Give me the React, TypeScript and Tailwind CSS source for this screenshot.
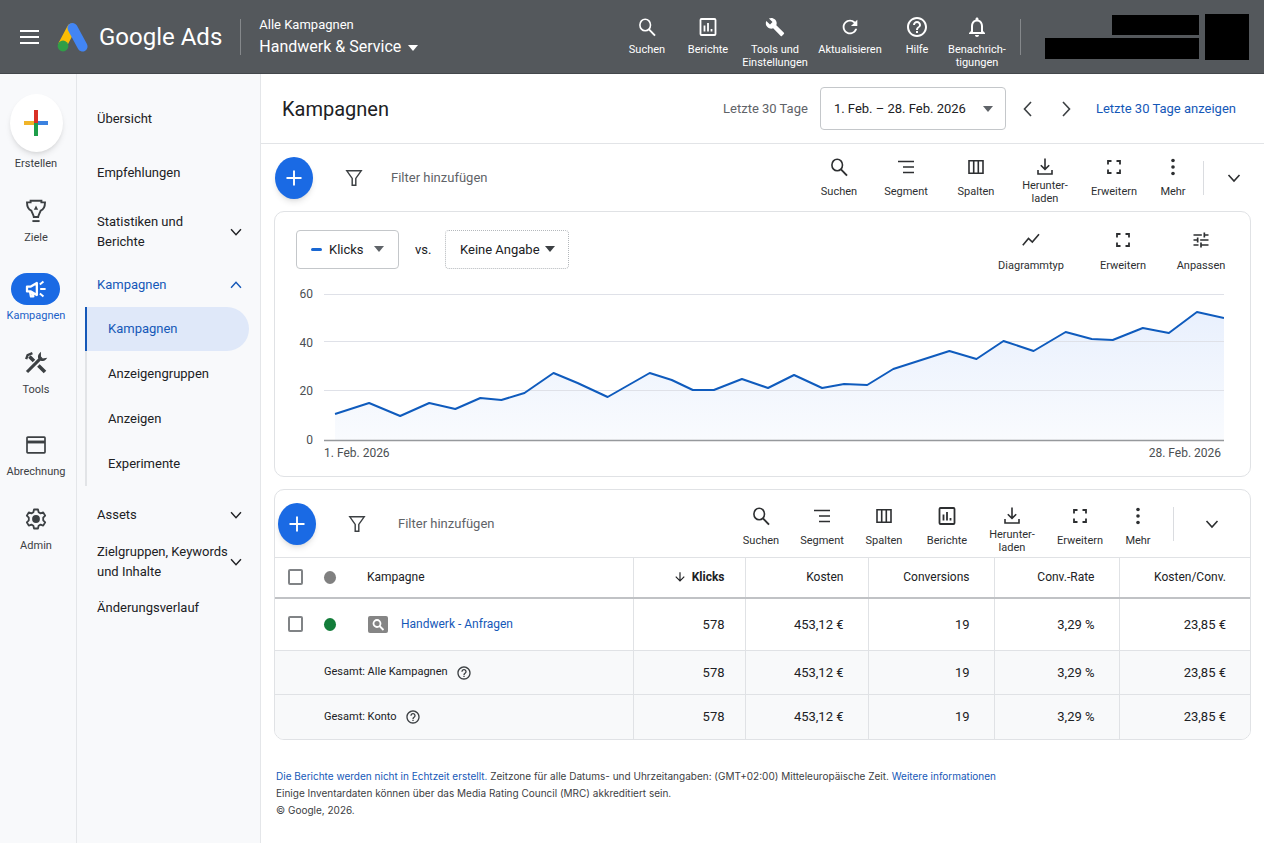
import type { ReactNode } from 'react';
import { MdArrowDownward, MdBuild, MdHelpOutline, MdOutlineNotifications, MdRefresh, MdTune } from 'react-icons/md';

interface ToolItem {
  label: ReactNode;
  icon: ReactNode;
  width: string;
}

interface RailItem {
  label: string;
  icon: ReactNode;
  spacing: string;
  active?: boolean;
}

const clicks: [number, number][] = [
  [11, 120], [45, 109], [76, 122], [105, 109], [131, 115], [156, 104], [177, 106], [200, 99],
  [229, 79], [253, 89], [283, 103], [325, 79], [347, 86], [368, 96], [389, 96], [417, 85],
  [443, 94], [469, 81], [497, 94], [519, 90], [542, 91], [568, 75], [624, 57], [651, 65],
  [678, 47], [708, 57], [740, 38], [766, 45], [787, 46], [817, 34], [843, 39], [871, 18], [898, 24],
];

const columns = [
  { label: 'Klicks', value: '578', pad: 'pr-5' },
  { label: 'Kosten', value: '453,12 €', pad: 'pr-6' },
  { label: 'Conversions', value: '19', pad: 'pr-6' },
  { label: 'Conv.-Rate', value: '3,29 %', pad: 'pr-6' },
  { label: 'Kosten/Conv.', value: '23,85 €', pad: 'pr-6' },
];

function Icon({ children, className = 'w-5 h-5' }: { children: ReactNode; className?: string }) {
  return (
    <svg viewBox="0 0 20 20" fill="none" stroke="currentColor" strokeWidth="1.6" className={className} aria-hidden="true">
      {children}
    </svg>
  );
}

const searchIcon = (
  <Icon>
    <ellipse cx="8.2" cy="8" rx="5.3" ry="5.8" />
    <path d="M12 12.4 18 18.6" strokeWidth="1.9" />
  </Icon>
);
const segmentIcon = (
  <Icon>
    <path d="M2 4.5h16M7 10h11M7 15.5h11" />
  </Icon>
);
const columnsIcon = (
  <Icon>
    <path d="M3 3.8h14v12.4H3zM7.7 4v12M12.3 4v12" />
  </Icon>
);
const reportIcon = (
  <Icon>
    <rect x="2.5" y="2" width="15" height="16" rx="1" strokeWidth="1.8" />
    <path d="M6.5 8.5v6M10 6v8.5M13.5 12v2.5" strokeWidth="1.8" />
  </Icon>
);
const downloadIcon = (
  <Icon>
    <path d="M10 1.5V12M5.8 8.2 10 12.4l4.2-4.2M3 13v4h14v-4" />
  </Icon>
);
const expandIcon = (
  <Icon>
    <path d="M4 7.5V4h3.5M12.5 4H16v3.5M16 12.5V16h-3.5M7.5 16H4v-3.5" strokeWidth="1.8" />
  </Icon>
);
const moreIcon = (
  <Icon>
    <g fill="currentColor" stroke="none">
      <circle cx="10" cy="3.5" r="1.8" />
      <circle cx="10" cy="10" r="1.8" />
      <circle cx="10" cy="16.5" r="1.8" />
    </g>
  </Icon>
);
const trendIcon = (
  <Icon>
    <path d="M1.8 15.2 7.5 8.5l3.8 3.5L18 4.2" />
  </Icon>
);

function Chevron({ dir, className = 'w-5 h-5' }: { dir: 'up' | 'down' | 'left' | 'right'; className?: string }) {
  const paths = {
    up: 'M4.5 13 10 7l5.5 6',
    down: 'M4.5 7 10 13l5.5-6',
    left: 'M13 3 6.5 10l6.5 7',
    right: 'M7 3l6.5 7L7 17',
  };
  return (
    <Icon className={className}>
      <path d={paths[dir]} />
    </Icon>
  );
}

function Caret({ className }: { className: string }) {
  return (
    <svg viewBox="0 0 10 6" className={`pointer-events-none absolute h-[6px] w-[10px] ${className}`} aria-hidden="true">
      <path d="M0 0h10L5 6z" fill="currentColor" />
    </svg>
  );
}

function FunnelIcon() {
  return (
    <Icon className="h-5 w-[18px] text-[#3c4043]">
      <path d="M2 2h16l-6 8.5V18H8v-7.5z" />
    </Icon>
  );
}

const downloadLabel = (
  <>
    Herunter-
    <br />
    laden
  </>
);

function ToolButton({ item }: { item: ToolItem }) {
  return (
    <button type="button" className={`flex flex-col items-center pt-3 text-[#2d2f31] ${item.width}`}>
      {item.icon}
      <span className="mt-0.5 flex h-[26px] items-center text-center text-[11px] leading-[13px] whitespace-nowrap">{item.label}</span>
    </button>
  );
}

function AddButton() {
  return (
    <button type="button" aria-label="Neue Kampagne" className="flex h-[42px] w-[38px] items-center justify-center rounded-[50%] bg-[#1a6ae4] text-white shadow-md">
      <Icon>
        <path d="M10 2.5v15M2.5 10h15" strokeWidth="1.9" />
      </Icon>
    </button>
  );
}

const pageTools: ToolItem[] = [
  { label: 'Suchen', icon: searchIcon, width: 'w-[66px]' },
  { label: 'Segment', icon: segmentIcon, width: 'w-[68px]' },
  { label: 'Spalten', icon: columnsIcon, width: 'w-[72px]' },
  { label: downloadLabel, icon: downloadIcon, width: 'w-[66px]' },
  { label: 'Erweitern', icon: expandIcon, width: 'w-[72px]' },
  { label: 'Mehr', icon: moreIcon, width: 'w-[46px]' },
];

const tableTools: ToolItem[] = [
  { label: 'Suchen', icon: searchIcon, width: 'w-[60px]' },
  { label: 'Segment', icon: segmentIcon, width: 'w-[62px]' },
  { label: 'Spalten', icon: columnsIcon, width: 'w-[62px]' },
  { label: 'Berichte', icon: reportIcon, width: 'w-[64px]' },
  { label: downloadLabel, icon: downloadIcon, width: 'w-[66px]' },
  { label: 'Erweitern', icon: expandIcon, width: 'w-[70px]' },
  { label: 'Mehr', icon: moreIcon, width: 'w-[46px]' },
];

const chartTools: ToolItem[] = [
  { label: 'Diagrammtyp', icon: trendIcon, width: 'w-[106px]' },
  { label: 'Erweitern', icon: expandIcon, width: 'w-[78px]' },
  { label: 'Anpassen', icon: <MdTune className="h-5 w-5" />, width: 'w-[78px]' },
];

const headerTools: ToolItem[] = [
  { label: 'Suchen', icon: searchIcon, width: 'w-[60px]' },
  { label: 'Berichte', icon: reportIcon, width: 'w-[62px]' },
  { label: <>Tools und<br />Einstellungen</>, icon: <MdBuild className="h-5 w-5" />, width: 'w-[72px]' },
  { label: 'Aktualisieren', icon: <MdRefresh className="h-[22px] w-[22px]" />, width: 'w-[78px]' },
  { label: 'Hilfe', icon: <MdHelpOutline className="h-6 w-6" />, width: 'w-[56px]' },
  { label: <>Benachrich-<br />tigungen</>, icon: <MdOutlineNotifications className="h-6 w-6" />, width: 'w-[64px]' },
];

function Header() {
  return (
    <header className="flex h-[74px] items-center border-b border-[#43474b] bg-[#54585c] text-white">
      <button type="button" aria-label="Menü" className="ml-5 flex h-5 w-[19px] items-center">
        <svg viewBox="0 0 19 14" className="h-[14px] w-[19px]" stroke="currentColor" strokeWidth="2" aria-hidden="true">
          <path d="M0 1h19M0 7h19M0 13h19" />
        </svg>
      </button>
      <svg viewBox="0 0 31 30" className="ml-[18px] h-[30px] w-[31px]" strokeLinecap="round" aria-hidden="true">
        <path d="M14.5 6 6 22" stroke="#fbbc04" strokeWidth="9" />
        <path d="M15.500 6 25.5 24.5" stroke="#4285f4" strokeWidth="10" />
        <circle cx="6" cy="24" r="5.4" fill="#2f9e47" />
      </svg>
      <span className="ml-[11px] text-2xl whitespace-nowrap">Google Ads</span>
      <div className="ml-[18px] h-9 w-px bg-[#85888b]" />
      <div className="ml-[18px] flex flex-col">
        <label htmlFor="account" className="text-[13px] leading-5">Alle Kampagnen</label>
        <div className="relative">
          <select id="account" className="w-[162px] appearance-none bg-transparent text-base leading-6">
            <option>Handwerk &amp; Service</option>
          </select>
          <Caret className="top-[10px] right-[3px]" />
        </div>
      </div>
      <nav className="ml-auto flex h-full pt-4" aria-label="Hauptfunktionen">
        {headerTools.map((item, i) => (
          <button key={i} type="button" className={`flex flex-col items-center ${item.width}`}>
            <span className="flex h-[22px] items-center">{item.icon}</span>
            <span className="mt-[5px] text-[11px] leading-[13px] whitespace-nowrap">{item.label}</span>
          </button>
        ))}
      </nav>
      <div className="ml-[11px] h-9 w-px bg-[#85888b]" />
      <div className="ml-6 flex w-[154px] flex-col items-end gap-[3px]">
        <div className="h-5 w-[87px] bg-black" />
        <div className="h-[21px] w-full bg-black" />
      </div>
      <div className="mr-[15px] ml-1.5 h-[46px] w-11 bg-black" />
    </header>
  );
}

const railItems: RailItem[] = [
  {
    label: 'Ziele',
    spacing: 'mt-6',
    icon: (
      <Icon className="h-6 w-6">
        <path d="M5.5 1.5h9v1.300h3c0 4-1.2 6.200-3.600 6.900C13 12 12 13.500 11.800 15H8.200C8 13.500 7 12 6.100 9.700 3.700 9 2.500 6.800 2.500 2.800h3z" />
        <path d="M7 18.400h6" />
        <path d="M10 5.500 11.800 9H8.200z" fill="currentColor" stroke="none" />
      </Icon>
    ),
  },
  {
    label: 'Kampagnen',
    spacing: 'mt-7',
    active: true,
    icon: (
      <Icon className="h-6 w-6">
        <path d="M2.5 8h3.200l5-3v10l-5-3H2.500zM5 12.200l.8 4h2l-.6-3.400" strokeWidth="1.900" strokeLinejoin="round" />
        <path d="M13.500 10h4.500M13.200 6.200l3-2.400M13.200 13.800l3 2.400" strokeWidth="1.700" />
      </Icon>
    ),
  },
  {
    label: 'Tools',
    spacing: 'mt-6',
    icon: (
      <Icon className="h-6 w-6">
        <path d="M4.500 4.500 8.300 8.300M12 12l5.500 5.500" strokeWidth="3" />
        <path d="M1.800 6.800 3 3.500 7 1.800" strokeWidth="2" />
        <path d="M2.500 17.500 13 7" strokeWidth="2.600" />
        <path d="M13.600 1.800c-1.800 1.600-2 3.800-.6 5.200s3.800 1.200 5.200-.6l-2.700.4-1.900-2z" fill="currentColor" strokeWidth="1" />
      </Icon>
    ),
  },
  {
    label: 'Abrechnung',
    spacing: 'mt-8',
    icon: (
      <Icon className="h-6 w-6">
        <rect x="2.5" y="3.5" width="15" height="13" rx=".6" strokeWidth="1.4" />
        <path d="M2.5 7.5h15" strokeWidth="2.4" />
      </Icon>
    ),
  },
  {
    label: 'Admin',
    spacing: 'mt-6',
    icon: (
      <svg viewBox="0 0 24 24" className="h-6 w-6" fill="none" stroke="currentColor" strokeWidth="1.8" strokeLinejoin="round" aria-hidden="true">
        <path d="M10 2.5h4l.6 2.800 2 1.100 2.600-1 2 3.300-2 2v2.600l2 2-2 3.300-2.600-1-2 1.100-.6 2.800h-4l-.6-2.800-2-1.100-2.600 1-2-3.300 2-2v-2.600l-2-2 2-3.300 2.600 1 2-1.100z" />
        <circle cx="12" cy="12" r="3" fill="currentColor" />
      </svg>
    ),
  },
];

function Rail() {
  return (
    <nav className="flex w-[77px] flex-none flex-col items-center border-r border-[#e4e6e9] pt-5 pr-1" aria-label="Bereiche">
      <button type="button" className="flex flex-col items-center text-[11px] text-[#3c4043]">
        <span className="flex h-[58px] w-[53px] items-center justify-center rounded-[50%] bg-white shadow-md">
          <svg viewBox="0 0 24 26" className="h-[26px] w-6" strokeWidth="4" aria-hidden="true">
            <path d="M0 13h10" stroke="#f0b429" />
            <path d="M14 13h10" stroke="#3b82e0" />
            <path d="M12 0v13" stroke="#d93025" />
            <path d="M12 13v13" stroke="#1e9e4a" />
          </svg>
        </span>
        <span className="mt-[5px] leading-[14px]">Erstellen</span>
      </button>
      {railItems.map((item) => (
        <a key={item.label} href="#" className={`flex flex-col items-center text-[11px] ${item.spacing} ${item.active ? 'text-[#1a5fc8]' : 'text-[#3c4043]'}`}>
          <span className={`flex h-8 w-[49px] items-center justify-center rounded-full ${item.active ? 'bg-[#1a6ae4] text-white' : ''}`}>{item.icon}</span>
          <span className="mt-1 leading-[14px]">{item.label}</span>
        </a>
      ))}
    </nav>
  );
}

function NavLink({ children, height, chevron, active }: { children: ReactNode; height: string; chevron?: 'up' | 'down'; active?: boolean }) {
  return (
    <a href="#" className={`flex items-center justify-between pr-[15px] pl-5 leading-5 ${height} ${active ? 'text-[#1558b8]' : ''}`}>
      <span className="min-w-0 whitespace-nowrap">{children}</span>
      {chevron && <Chevron dir={chevron} className="h-[18px] w-[18px] flex-none" />}
    </a>
  );
}

function SideNav() {
  return (
    <nav className="w-[184px] flex-none border-r border-[#e4e6e9] pt-[18px] text-[13px] text-[#202124]" aria-label="Seiten">
      <NavLink height="h-[54px]">Übersicht</NavLink>
      <NavLink height="h-[54px]">Empfehlungen</NavLink>
      <NavLink height="h-[63px]" chevron="down">Statistiken und<br />Berichte</NavLink>
      <NavLink height="h-11" chevron="up" active>Kampagnen</NavLink>
      <div className="mr-[11px] ml-2">
        <a href="#" aria-current="page" className="flex h-11 items-center rounded-r-full border-l-2 border-[#1558b8] bg-[#dfe8f9] pl-[21px] text-[#1558b8]">Kampagnen</a>
        {['Anzeigengruppen', 'Anzeigen', 'Experimente'].map((name) => (
          <a key={name} href="#" className="flex h-[45px] items-center border-l-2 border-[#e2e4e7] pl-[21px]">{name}</a>
        ))}
      </div>
      <div className="pt-[7px]">
        <NavLink height="h-11" chevron="down">Assets</NavLink>
        <NavLink height="h-[50px]" chevron="down">Zielgruppen, Keywords<br />und Inhalte</NavLink>
        <NavLink height="h-[42px]">Änderungsverlauf</NavLink>
      </div>
    </nav>
  );
}

function TitleBar() {
  return (
    <div className="flex h-[70px] items-center border-b border-[#e2e4e7] pr-7 pl-[21px] text-[13px]">
      <h1 className="text-xl text-[#202124]">Kampagnen</h1>
      <label htmlFor="range" className="ml-auto text-[#5f6368]">Letzte 30 Tage</label>
      <div className="relative ml-3">
        <select id="range" className="h-[43px] w-[186px] appearance-none rounded border border-[#c4c7ca] bg-white pl-[13px] text-[#202124]">
          <option>1. Feb. – 28. Feb. 2026</option>
        </select>
        <Caret className="top-[19px] right-[13px] text-[#5f6368]" />
      </div>
      <button type="button" aria-label="Zurück" className="ml-3 text-[#3c4043]"><Chevron dir="left" /></button>
      <button type="button" aria-label="Weiter" className="ml-[18px] text-[#3c4043]"><Chevron dir="right" /></button>
      <a href="#" className="ml-5 text-[#1558b8]">Letzte 30 Tage anzeigen</a>
    </div>
  );
}

function ChartCard() {
  const line = clicks.map(([x, y]) => `${x},${y}`).join(' ');
  return (
    <section className="mx-[13px] rounded-[10px] border border-[#e0e2e5] bg-white pb-[14px]">
      <div className="flex items-start pt-1.5 pr-[10px] pl-[21px] text-[13px] text-[#202124]">
        <div className="flex items-center pt-3">
          <div className="relative">
            <span className="pointer-events-none absolute top-[18px] left-[15px] h-[3px] w-[11px] rounded-sm bg-[#1967d2]" />
            <select aria-label="Messwert" className="h-[39px] w-[103px] appearance-none rounded border border-[#c4c7ca] bg-white pl-8">
              <option>Klicks</option>
            </select>
            <Caret className="top-4 right-[15px] text-[#5f6368]" />
          </div>
          <label htmlFor="compare" className="mx-[14px] w-[18px] pl-0.5">vs.</label>
          <div className="relative">
            <select id="compare" className="h-[39px] w-[124px] appearance-none rounded border border-dotted border-[#b4b8bc] bg-white pl-[14px]">
              <option>Keine Angabe</option>
            </select>
            <Caret className="top-4 right-[14px] text-[#3c4043]" />
          </div>
        </div>
        <div className="ml-auto flex">
          {chartTools.map((item, i) => <ToolButton key={i} item={item} />)}
        </div>
      </div>
      <div className="mt-2 mr-[26px] flex text-xs text-[#4b4f53]">
        <div className="flex h-[162px] w-[38px] flex-none flex-col justify-between text-right leading-4">
          <span>60</span>
          <span>40</span>
          <span>20</span>
          <span>0</span>
        </div>
        <div className="ml-[11px] min-w-0 flex-1 pt-2">
          <svg viewBox="0 0 898 148" preserveAspectRatio="none" className="block h-[148px] w-full" role="img" aria-label="Klicks im Februar 2026">
            <defs>
              <linearGradient id="area" x1="0" y1="0" x2="0" y2="1">
                <stop offset="0" stopColor="#e9f0fd" />
                <stop offset="1" stopColor="#f9fbfe" />
              </linearGradient>
            </defs>
            <polygon points={`11,146 ${line} 898,146`} fill="url(#area)" />
            <path d="M0 .5h898M0 47.5h898M0 96.5h898" stroke="#dfe1e8" />
            <path d="M0 146.5h898" stroke="#96999c" strokeWidth="1.5" />
            <polyline points={line} fill="none" stroke="#0f5bbd" strokeWidth="2" strokeLinejoin="round" vectorEffect="non-scaling-stroke" />
          </svg>
          <div className="mt-0.5 flex justify-between pr-[3px] leading-[18px]">
            <span>1. Feb. 2026</span>
            <span>28. Feb. 2026</span>
          </div>
        </div>
      </div>
    </section>
  );
}

function Checkbox({ label }: { label: string }) {
  return <input type="checkbox" aria-label={label} className="block h-4 w-[15px] appearance-none rounded-xs border-2 border-[#808386] bg-white checked:bg-[#1a6ae4]" />;
}

function TotalRow({ label }: { label: string }) {
  return (
    <tr className="h-11 border-t border-[#e0e2e5] bg-[#f8f9fa]">
      <th />
      <th colSpan={2} scope="row" className="border-r border-[#e0e2e5] text-left text-[11px] font-normal">
        <span className="flex items-center gap-2">
          {label}
          <MdHelpOutline className="h-4 w-4 text-[#3c4043]" />
        </span>
      </th>
      {columns.map((c) => (
        <td key={c.label} className={`border-r border-[#e0e2e5] text-right last:border-r-0 ${c.pad}`}>{c.value}</td>
      ))}
    </tr>
  );
}

function CampaignTable() {
  return (
    <table className="w-full table-fixed border-collapse border-t border-[#e0e2e5] text-[13px] text-[#202124]">
      <colgroup>
        <col className="w-[49px]" />
        <col className="w-[43px]" />
        <col />
        <col className="w-[112px]" />
        <col className="w-[123px]" />
        <col className="w-[126px]" />
        <col className="w-[125px]" />
        <col className="w-[131px]" />
      </colgroup>
      <thead>
        <tr className="h-10 border-b-2 border-[#c0c2c5] text-xs">
          <th className="pl-[13px]"><Checkbox label="Alle auswählen" /></th>
          <th><span className="block h-[13px] w-3 rounded-[50%] bg-[#808080]" /></th>
          <th className="border-r border-[#e0e2e5] text-left font-normal">Kampagne</th>
          {columns.map((c, i) => (
            <th key={c.label} className={`border-r border-[#e0e2e5] text-right last:border-r-0 ${c.pad} ${i === 0 ? 'font-bold' : 'font-normal'}`}>
              {i === 0 ? (
                <span className="flex items-center justify-end gap-[5px]">
                  <MdArrowDownward className="h-[14px] w-[14px]" />
                  {c.label}
                </span>
              ) : c.label}
            </th>
          ))}
        </tr>
      </thead>
      <tbody>
        <tr className="h-[53px]">
          <td className="pl-[13px]"><Checkbox label="Handwerk - Anfragen auswählen" /></td>
          <td><span className="block h-[13px] w-3 rounded-[50%] bg-[#137d3a]" /></td>
          <td className="border-r border-[#e0e2e5]">
            <span className="flex items-center gap-[13px] pl-px">
              <span className="flex h-[17px] w-5 items-center justify-center rounded-xs bg-[#858585] text-white">
                <svg viewBox="0 0 20 17" className="h-[17px] w-5" fill="none" stroke="currentColor" strokeWidth="1.8" aria-hidden="true">
                  <circle cx="9" cy="7.5" r="3.5" />
                  <path d="m11.5 10 4 4" />
                </svg>
              </span>
              <a href="#" className="text-xs text-[#1558b8]">Handwerk - Anfragen</a>
            </span>
          </td>
          {columns.map((c) => (
            <td key={c.label} className={`border-r border-[#e0e2e5] text-right last:border-r-0 ${c.pad}`}>{c.value}</td>
          ))}
        </tr>
        <TotalRow label="Gesamt: Alle Kampagnen" />
        <TotalRow label="Gesamt: Konto" />
      </tbody>
    </table>
  );
}

export default function App() {
  return (
    <div className="flex min-h-screen flex-col bg-[#f8f9fb] font-[Roboto,sans-serif]">
      <Header />
      <div className="flex flex-1">
        <Rail />
        <SideNav />
        <main className="min-w-0 flex-1 bg-white">
          <TitleBar />
          <div className="flex h-[67px] items-center pr-5 pl-[14px]">
            <AddButton />
            <span className="ml-8"><FunnelIcon /></span>
            <input type="text" aria-label="Filter" placeholder="Filter hinzufügen" className="ml-7 min-w-0 flex-1 text-[13px] placeholder:text-[#5f6368]" />
            <div className="flex pb-1.5">
              {pageTools.map((item, i) => <ToolButton key={i} item={item} />)}
            </div>
            <div className="mr-5 ml-[7px] h-[34px] w-px bg-[#dadce0]" />
            <button type="button" aria-label="Minimieren" className="text-[#2d2f31]"><Chevron dir="down" /></button>
          </div>
          <ChartCard />
          <section className="mx-[13px] mt-3 overflow-hidden rounded-[10px] border border-[#e0e2e5] bg-white">
            <div className="flex h-[67px] items-center pr-7 pl-[3px]">
              <AddButton />
              <span className="ml-8"><FunnelIcon /></span>
              <input type="text" aria-label="Tabellenfilter" placeholder="Filter hinzufügen" className="ml-8 min-w-0 flex-1 text-[13px] placeholder:text-[#5f6368]" />
              {tableTools.map((item, i) => <ToolButton key={i} item={item} />)}
              <div className="mr-7 ml-3 h-[34px] w-px bg-[#dadce0]" />
              <button type="button" aria-label="Minimieren" className="text-[#2d2f31]"><Chevron dir="down" /></button>
            </div>
            <CampaignTable />
          </section>
          <footer className="px-[15px] pt-7 pb-4 font-[Inter,sans-serif] text-[10px] leading-[17px] text-[#3c4043]">
            <p>
              <a href="#" className="text-[#1558b8]">Die Berichte werden nicht in Echtzeit erstellt.</a> Zeitzone für alle Datums- und Uhrzeitangaben: (GMT+02:00) Mitteleuropäische Zeit.{' '}
              <a href="#" className="text-[#1558b8]">Weitere informationen</a>
            </p>
            <p>Einige Inventardaten können über das Media Rating Council (MRC) akkreditiert sein.</p>
            <p>© Google, 2026.</p>
          </footer>
        </main>
      </div>
    </div>
  );
}
